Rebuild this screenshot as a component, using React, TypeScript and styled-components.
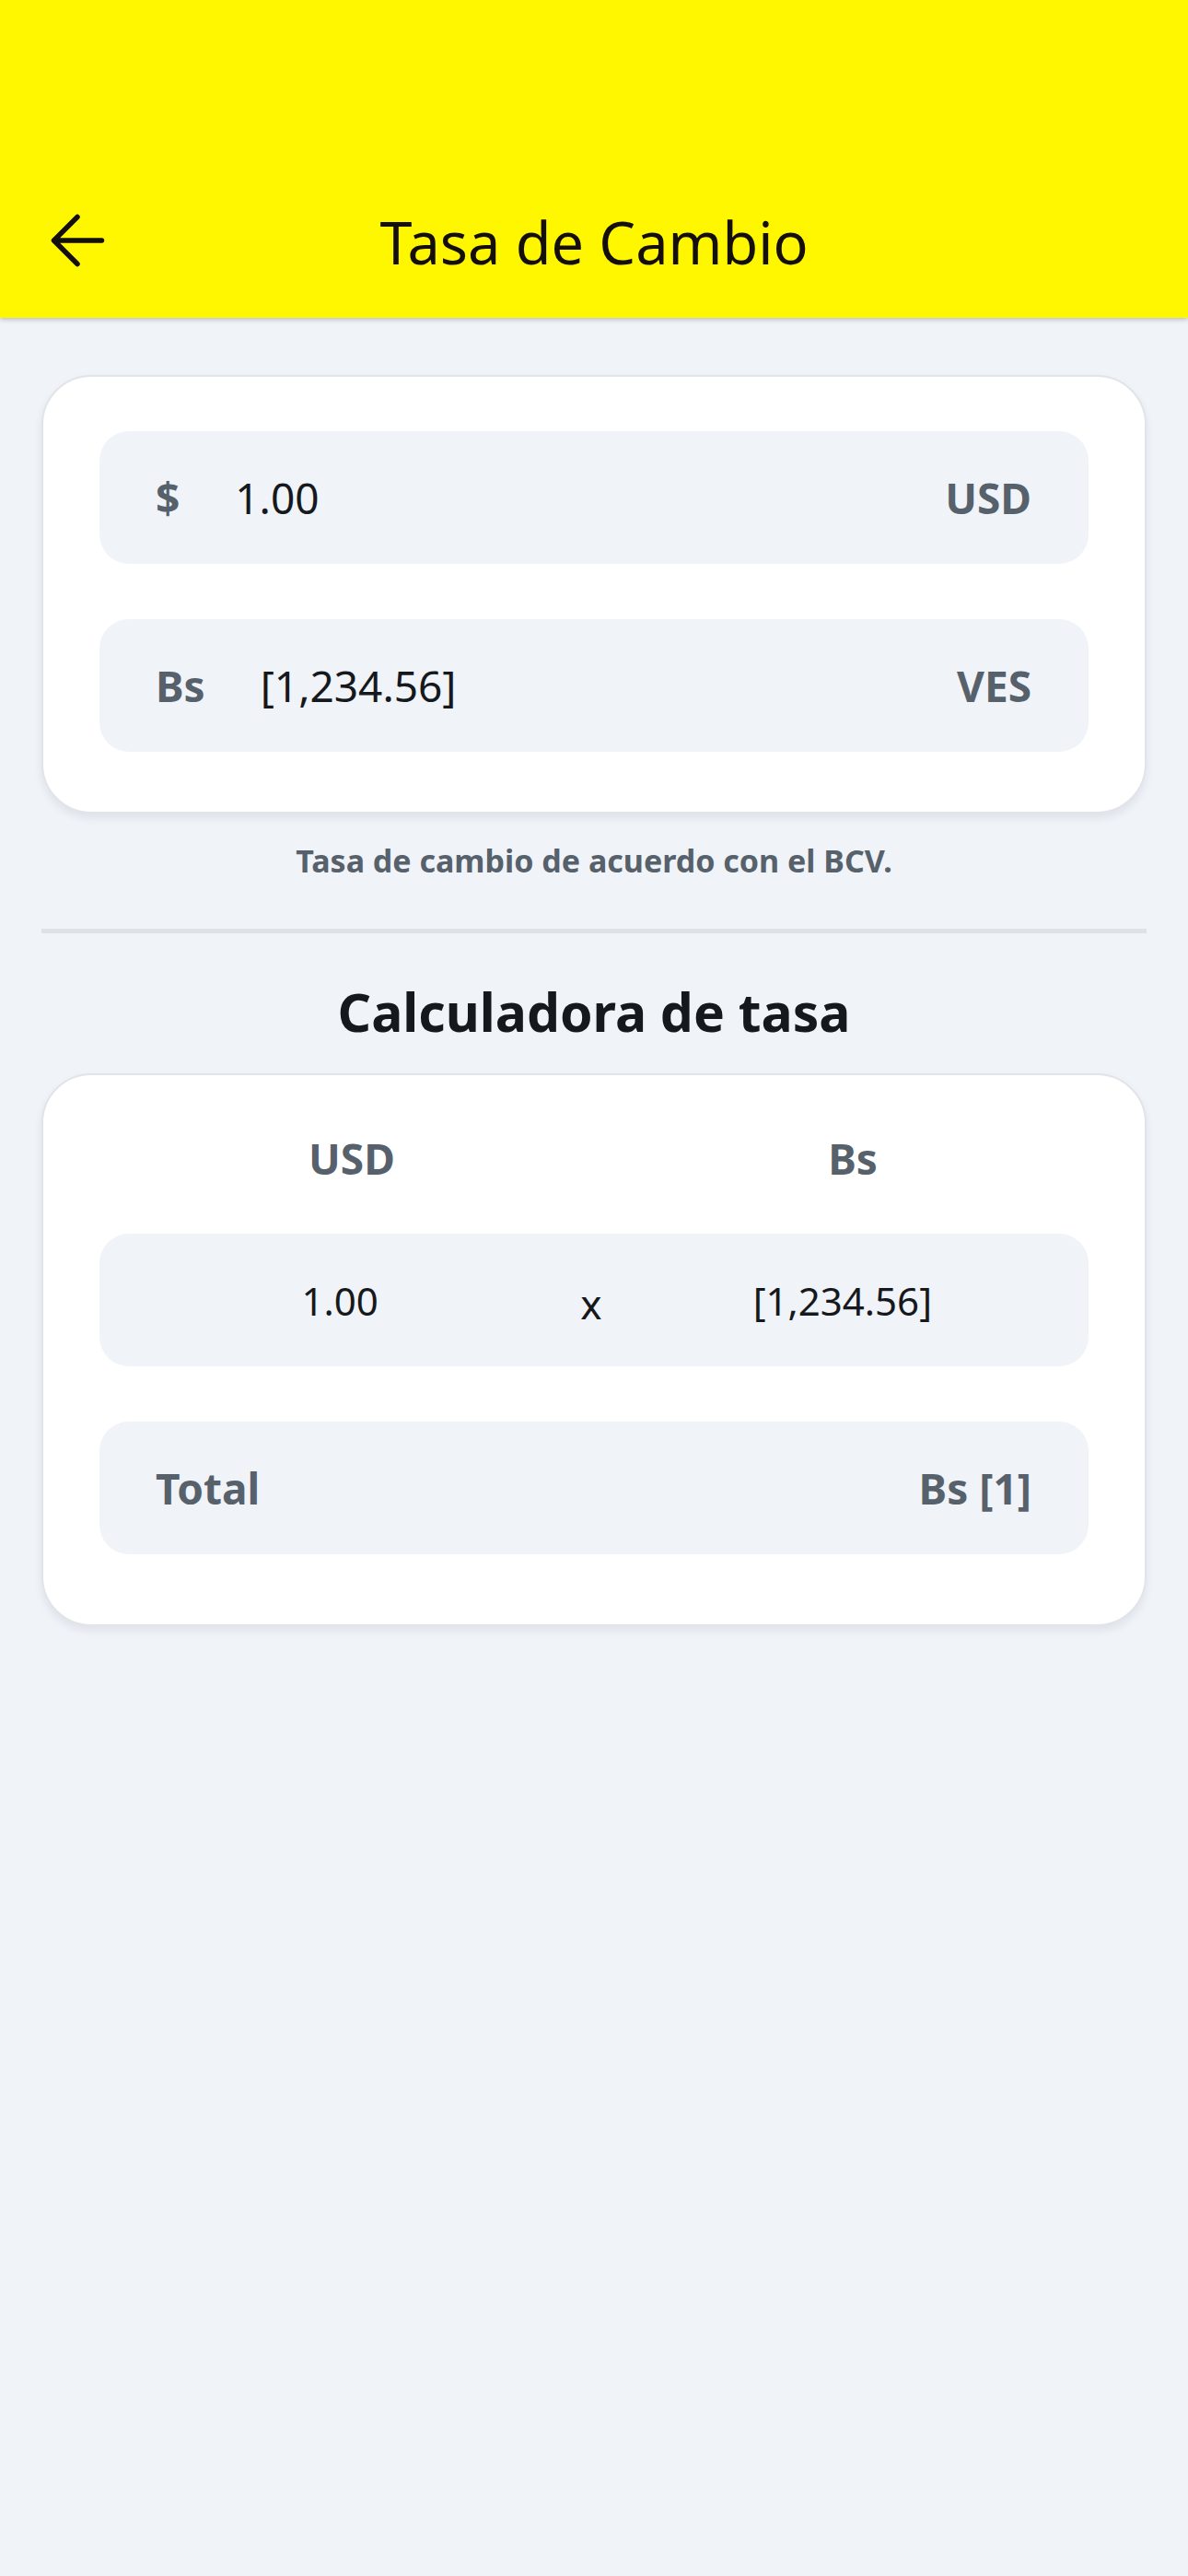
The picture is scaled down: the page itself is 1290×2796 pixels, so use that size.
import React from "react";
import styled, { createGlobalStyle } from "styled-components";

const GlobalStyle = createGlobalStyle`
  html, body {
    margin: 0;
    padding: 0;
    background: #f0f3f8;
  }
  body {
    font-family: "Noto Sans", "Open Sans", sans-serif;
    color: #15181c;
  }
  * { box-sizing: border-box; }
`;

const Page = styled.div`
  min-height: 2796px;
  background: #f0f3f8;
  display: flex;
  flex-direction: column;
`;

const Header = styled.header`
  height: 345px;
  background: #fff700;
  box-shadow: 0 2px 5px rgba(0, 0, 0, 0.22);
  padding-top: 177px;
  position: relative;
  z-index: 1;
`;

const Toolbar = styled.div`
  height: 168px;
  display: grid;
  grid-template-columns: 1fr auto 1fr;
  align-items: center;
  padding: 0 50px;
`;

const BackButton = styled.button`
  justify-self: start;
  background: none;
  border: none;
  padding: 0;
  width: 68px;
  height: 64px;
  display: flex;
  cursor: pointer;
`;

const Title = styled.h1`
  margin: 0;
  font-size: 63px;
  font-weight: 400;
  color: #140f0d;
  line-height: 1;
  padding-top: 2px;
`;

const Main = styled.main`
  padding: 62px 45px 0;
  display: flex;
  flex-direction: column;
`;

const Card = styled.section<{ $padTop: number; $padBottom: number }>`
  background: #ffffff;
  border: 2px solid #e1e4e9;
  border-radius: 54px;
  box-shadow: 0 5px 10px rgba(30, 40, 60, 0.08);
  padding: ${(p) => p.$padTop}px 61px ${(p) => p.$padBottom}px;
  display: flex;
  flex-direction: column;
  gap: 60px;
`;

const Field = styled.div`
  height: 144px;
  background: #f0f3f8;
  border-radius: 32px;
  padding: 0 62px 0 61px;
  display: flex;
  align-items: center;
  gap: 60px;
`;

const Label = styled.span`
  font-size: 46px;
  font-weight: 700;
  color: #56616b;
`;

const Value = styled.span`
  font-size: 46px;
  font-weight: 400;
  color: #15181c;
  flex: 1;
`;

const Caption = styled.p`
  margin: 27px 0 0;
  text-align: center;
  font-size: 34px;
  font-weight: 700;
  color: #56616b;
  line-height: 48px;
`;

const Divider = styled.hr`
  margin: 50px 0 0;
  border: none;
  height: 5px;
  background: #dee1e6;
`;

const SectionTitle = styled.h2`
  margin: 45px 0 27px;
  text-align: center;
  font-size: 57px;
  font-weight: 700;
  color: #15181c;
  line-height: 80px;
`;

const ColumnHeads = styled.div`
  display: grid;
  grid-template-columns: 1fr 1fr;
  height: 56px;
  align-items: center;
  margin-right: -16px;
  padding-left: 2px;
  margin-bottom: -3px;
`;

const ColumnHead = styled.span`
  text-align: center;
  font-size: 46px;
  font-weight: 700;
  color: #56616b;
`;

const CalcRow = styled.div`
  height: 144px;
  background: #f0f3f8;
  border-radius: 32px;
  display: grid;
  grid-template-columns: 1fr auto 1fr;
  align-items: center;
  padding-right: 6px;
`;

const CalcValue = styled.span`
  text-align: center;
  font-size: 42px;
  color: #15181c;
`;

const Times = styled.span`
  font-size: 44px;
  color: #15181c;
  padding-top: 8px;
`;

const TotalRow = styled(Field)`
  justify-content: space-between;
`;

export default function App() {
  return (
    <>
      <GlobalStyle />
      <Page>
        <Header>
          <Toolbar>
            <BackButton aria-label="Volver">
              <svg width="68" height="64" viewBox="0 0 68 64" fill="none">
                <path
                  d="M60.5 32H8.5M34 6.5L8.5 32L34 57.5"
                  stroke="#140f0d"
                  strokeWidth="5.5"
                  strokeLinecap="round"
                  strokeLinejoin="round"
                />
              </svg>
            </BackButton>
            <Title>Tasa de Cambio</Title>
          </Toolbar>
        </Header>
        <Main>
          <Card $padTop={59} $padBottom={65}>
            <Field>
              <Label>$</Label>
              <Value>1.00</Value>
              <Label>USD</Label>
            </Field>
            <Field>
              <Label>Bs</Label>
              <Value>[1,234.56]</Value>
              <Label>VES</Label>
            </Field>
          </Card>
          <Caption>Tasa de cambio de acuerdo con el BCV.</Caption>
          <Divider />
          <SectionTitle>Calculadora de tasa</SectionTitle>
          <Card $padTop={59} $padBottom={76}>
            <ColumnHeads>
              <ColumnHead>USD</ColumnHead>
              <ColumnHead>Bs</ColumnHead>
            </ColumnHeads>
            <CalcRow>
              <CalcValue>1.00</CalcValue>
              <Times>x</Times>
              <CalcValue>[1,234.56]</CalcValue>
            </CalcRow>
            <TotalRow>
              <Label>Total</Label>
              <Label>Bs [1]</Label>
            </TotalRow>
          </Card>
        </Main>
      </Page>
    </>
  );
}
